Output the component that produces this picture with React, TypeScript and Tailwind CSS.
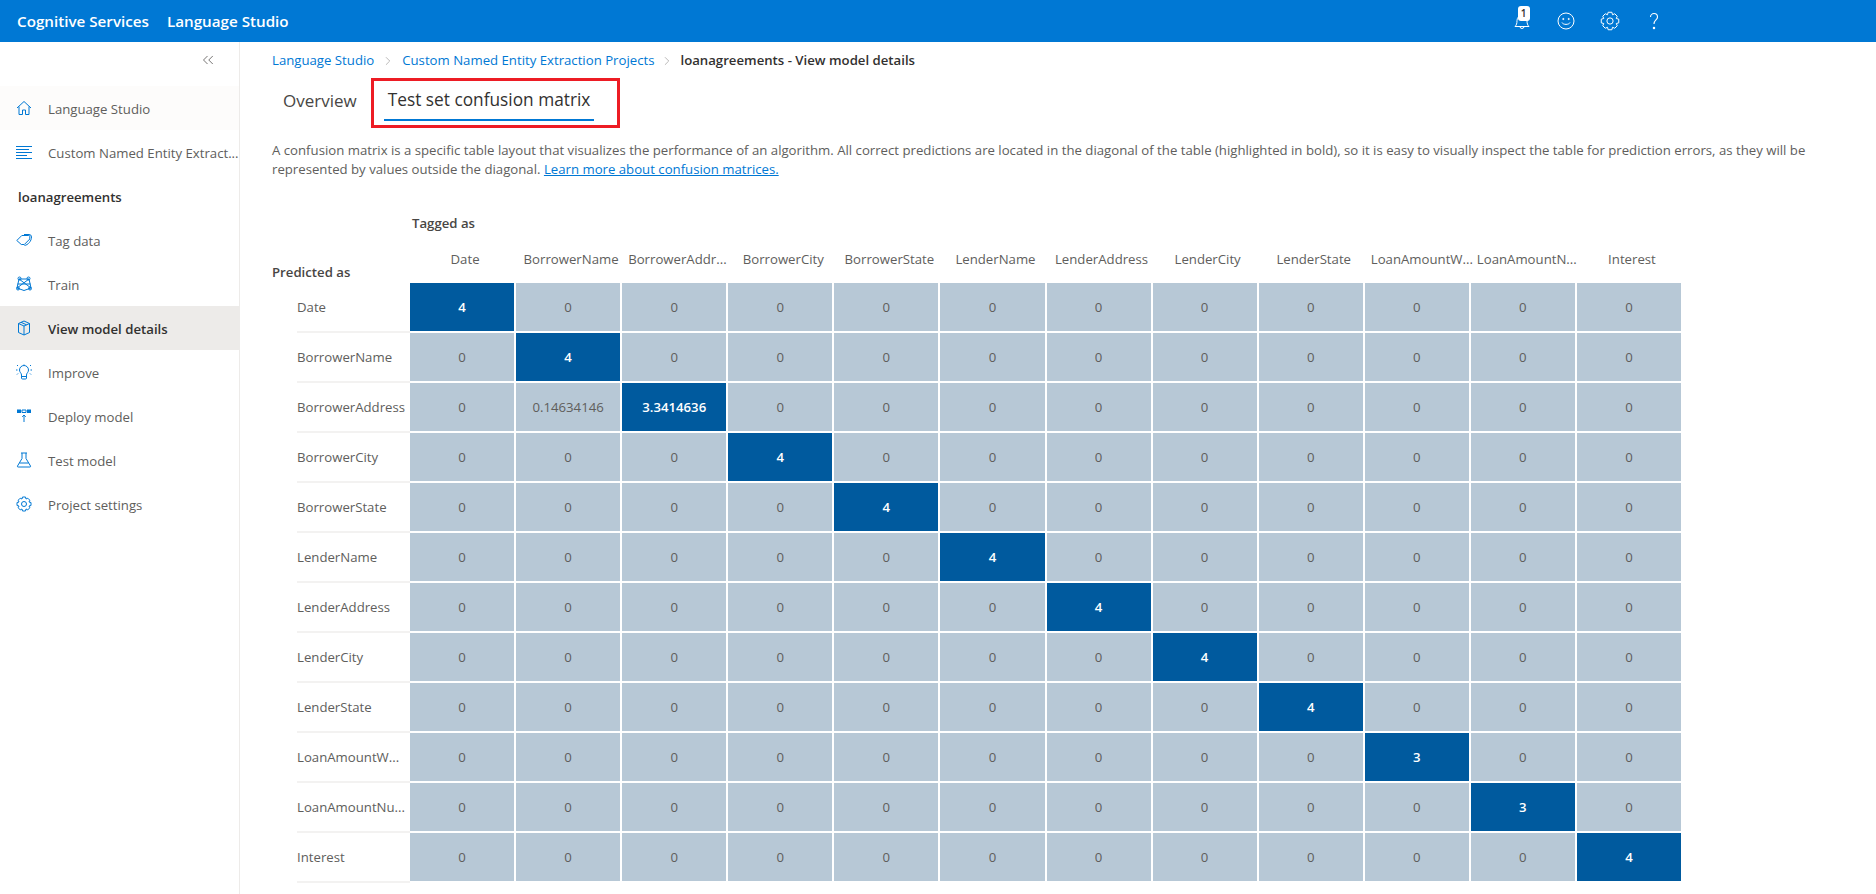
import { ReactNode } from "react";
import { ChevronRight, ChevronsLeft } from "lucide-react";

const rowLabels = [
  "Date",
  "BorrowerName",
  "BorrowerAddress",
  "BorrowerCity",
  "BorrowerState",
  "LenderName",
  "LenderAddress",
  "LenderCity",
  "LenderState",
  "LoanAmountW...",
  "LoanAmountNu...",
  "Interest",
];

const colLabels = [
  "Date",
  "BorrowerName",
  "BorrowerAddr...",
  "BorrowerCity",
  "BorrowerState",
  "LenderName",
  "LenderAddress",
  "LenderCity",
  "LenderState",
  "LoanAmountW...",
  "LoanAmountN...",
  "Interest",
];

const diagonal = ["4", "4", "3.3414636", "4", "4", "4", "4", "4", "4", "3", "3", "4"];

function Icon({ children }: { children: ReactNode }) {
  return (
    <svg
      viewBox="0 0 16 16"
      className="h-4 w-4 shrink-0 text-[#0078d4]"
      fill="none"
      stroke="currentColor"
      strokeWidth="1"
    >
      {children}
    </svg>
  );
}

const icons: Record<string, ReactNode> = {
  home: <path d="M1 8l7-6.500L15 8M3 6.500V14.500h3.500V10h3v4.500H13V6.500" />,
  list: <path d="M0 2.500h16M0 5.500h13M0 8.500h16M0 11.500h11M0 14.500h16" />,
  tag: (
    <>
      <path d="M.8 8.500l5-5h7a1 1 0 011 1v2.500l-5.500 5.500h-3z" />
      <path d="M8 2.500h5a2.500 2.500 0 012.500 2.500c0 4-3.500 8-7 8.500" />
    </>
  ),
  train: (
    <>
      <path d="M3 3h10l2 9-7 2.500L1 12zM3 3l12 9M13 3L1 12M1.500 8h13" />
      <circle cx="3.500" cy="2.500" r="1.500" />
      <circle cx="12.500" cy="2.500" r="1.500" />
      <circle cx="2" cy="12.500" r="1.500" />
      <circle cx="14" cy="12.500" r="1.500" />
    </>
  ),
  box: <path d="M8 1l5.500 2.500v9L8 15l-5.500-2.500v-9zM2.500 3.500L8 6l5.500-2.500M8 6v9M5 2.300l5.500 2.500" />,
  bulb: (
    <>
      <path d="M5.500 11c0-2-2-2.500-2-5a4.500 4.500 0 019 0c0 2.500-2 3-2 5v3a1 1 0 01-1 1h-3a1 1 0 01-1-1zM5.500 12.500h5" />
      <path d="M8 0v.5M1 1l1 1M15 1l-1 1M0 6h1.500M14.500 6H16M1 10.500l1-1M15 10.500l-1-1" />
    </>
  ),
  deploy: (
    <>
      <path d="M1 1.500h4v3.500H1zM11 1.500h4v3.500h-4z" fill="currentColor" stroke="none" />
      <path d="M6 2h4v2.500H6z" strokeWidth="1" />
      <path d="M8 14V7M6.200 8.800L8 7l1.800 1.800" />
    </>
  ),
  flask: <path d="M5 1h6M6 1v5.500L1.500 14a.7.7 0 00.6 1h11.800a.7.7 0 00.6-1L10 6.500V1M3.500 11h9" />,
  gear: (
    <>
      <path d="M6.500 1h3l.5 2 1.800-.8 2 2-.8 1.800 2 .5v3l-2 .5.8 1.800-2 2-1.800-.8-.5 2h-3l-.5-2-1.800.8-2-2 .8-1.800-2-.5v-3l2-.5-.8-1.800 2-2L6 3z" />
      <circle cx="8" cy="8" r="2.500" />
    </>
  ),
};

function NavItem({
  icon,
  label,
  active,
  tint,
}: {
  icon: string;
  label: string;
  active?: boolean;
  tint?: boolean;
}) {
  return (
    <div
      className={`flex h-11 items-center gap-[16px] pl-4 ${
        active ? "bg-[#edebe9] font-semibold text-[#323130]" : tint ? "bg-[#fdfcfb] text-[#605e5c]" : "text-[#605e5c]"
      }`}
    >
      <Icon>{icons[icon]}</Icon>
      <span className="whitespace-nowrap pt-[4px]">{label}</span>
    </div>
  );
}

function Sidebar() {
  return (
    <aside className="flex w-[240px] shrink-0 flex-col border-r border-[#edebe9]">
      <div className="flex h-[44px] items-start justify-end pt-[9px] pr-[22px] text-[#484644]">
        <ChevronsLeft size={18} strokeWidth={1} />
      </div>
      <NavItem icon="home" label="Language Studio" tint />
      <NavItem icon="list" label="Custom Named Entity Extract..." />
      <div className="flex h-11 items-center pt-[4px] pl-[18px] font-semibold text-[#323130]">loanagreements</div>
      <NavItem icon="tag" label="Tag data" />
      <NavItem icon="train" label="Train" />
      <NavItem icon="box" label="View model details" active />
      <NavItem icon="bulb" label="Improve" />
      <NavItem icon="deploy" label="Deploy model" />
      <NavItem icon="flask" label="Test model" />
      <NavItem icon="gear" label="Project settings" />
    </aside>
  );
}

function TopBar() {
  return (
    <header className="flex h-[42px] items-center bg-[#0078d4] pl-[17px] text-white">
      <span className="text-[15.2px] font-semibold">Cognitive Services</span>
      <span className="ml-[18px] text-[15.2px] font-semibold">Language Studio</span>
      <div className="ml-[1223px] flex items-center gap-[24px]">
        <div className="relative">
          <svg viewBox="0 0 20 20" className="h-5 w-5" fill="none" stroke="currentColor" strokeWidth="1">
            <path d="M3 15.500c1.500-1.500 2-3 2-6a5 5 0 0110 0c0 3 .5 4.500 2 6zM8 15.500a2 2 0 004 0" />
          </svg>
          <span className="absolute -top-[5px] left-[6px] flex h-[15px] w-3 items-center justify-center rounded-[3px] bg-white text-[10px] font-semibold text-[#323130]">
            1
          </span>
        </div>
        <svg viewBox="0 0 20 20" className="h-5 w-5" fill="none" stroke="currentColor" strokeWidth="1">
          <circle cx="10" cy="10" r="8" />
          <path d="M6 11.500c1 2.500 7 2.500 8 0" />
          <circle cx="7.300" cy="8" r=".6" fill="currentColor" />
          <circle cx="12.700" cy="8" r=".6" fill="currentColor" />
        </svg>
        <svg viewBox="0 0 16 16" className="h-5 w-5" fill="none" stroke="currentColor" strokeWidth=".8">
          {icons.gear}
        </svg>
        <svg viewBox="0 0 20 20" className="h-5 w-5" fill="none" stroke="currentColor" strokeWidth="1.100">
          <path d="M6.500 6a3.500 3.500 0 117 0c0 3-3.500 3-3.500 7" />
          <circle cx="10" cy="17" r=".7" fill="currentColor" />
        </svg>
      </div>
    </header>
  );
}

function Crumbs() {
  return (
    <div className="flex h-[36px] items-center pt-[1px]">
      <a className="text-[#0078d4]">Language Studio</a>
      <ChevronRight size={14} strokeWidth={1} className="mx-[7px] text-[#8a8886]" />
      <a className="text-[#0078d4]">Custom Named Entity Extraction Projects</a>
      <ChevronRight size={14} strokeWidth={1} className="mx-[6px] text-[#8a8886]" />
      <span className="font-semibold text-[#323130]">loanagreements - View model details</span>
    </div>
  );
}

function Tabs() {
  return (
    <div className="flex h-[50px] items-stretch text-[17px] text-[#484644]">
      <div className="flex items-center pr-[14px] pb-[4px] pl-[11px]">Overview</div>
      <div className="border-[3px] border-[#ed1c24] pr-[23px] pl-[10px]">
        <div className="flex h-[40px] items-center border-b-2 border-[#0078d4] px-[4px] text-[17.3px] text-[#323130]">
          Test set confusion matrix
        </div>
      </div>
    </div>
  );
}

function Matrix() {
  return (
    <div className="mt-[35px] flex text-[#605e5c]">
      <div className="w-[138px] shrink-0">
        <div className="flex h-[69px] items-end font-semibold text-[#484644]">Predicted as</div>
        {rowLabels.map((label) => (
          <div key={label} className="ml-[25px] flex h-[50px] items-center whitespace-nowrap border-b-2 border-[#f3f2f1] pt-[2px]">
            {label}
          </div>
        ))}
      </div>
      <div className="w-[1271px]">
        <div className="flex h-[20px] items-center pl-[2px] font-semibold text-[#484644]">Tagged as</div>
        <div className="mt-[9px] grid h-[40px] grid-cols-12 gap-x-[2px] pt-[7px]">
          {colLabels.map((label) => (
            <div key={label} className="whitespace-nowrap pl-[6px] text-center">
              {label}
            </div>
          ))}
        </div>
        <div className="grid grid-cols-12 gap-[2px]">
          {rowLabels.map((row, r) =>
            colLabels.map((col, c) => (
              <div
                key={row + col}
                className={`flex h-[48px] items-center justify-center pt-[2px] ${
                  r === c ? "bg-[#005a9e] font-semibold text-white" : "bg-[#b7c8d6] text-[#605e5c]"
                }`}
              >
                {r === c ? diagonal[r] : r === 2 && c === 1 ? "0.14634146" : "0"}
              </div>
            ))
          )}
        </div>
      </div>
    </div>
  );
}

export default function App() {
  return (
    <div className="h-[894px] overflow-hidden bg-white font-['Open_Sans',sans-serif] text-[13.2px]">
      <TopBar />
      <div className="flex h-[852px]">
        <Sidebar />
        <main className="min-w-0 flex-1 pl-[32px]">
          <Crumbs />
          <Tabs />
          <p className="mt-[13px] w-[1560px] leading-[19px] text-[#605e5c]">
            A confusion matrix is a specific table layout that visualizes the performance of an algorithm. All correct
            predictions are located in the diagonal of the table (highlighted in bold), so it is easy to visually
            inspect the table for prediction errors, as they will be represented by values outside the diagonal.{" "}
            <a className="text-[#0078d4] underline">Learn more about confusion matrices.</a>
          </p>
          <Matrix />
        </main>
      </div>
    </div>
  );
}
